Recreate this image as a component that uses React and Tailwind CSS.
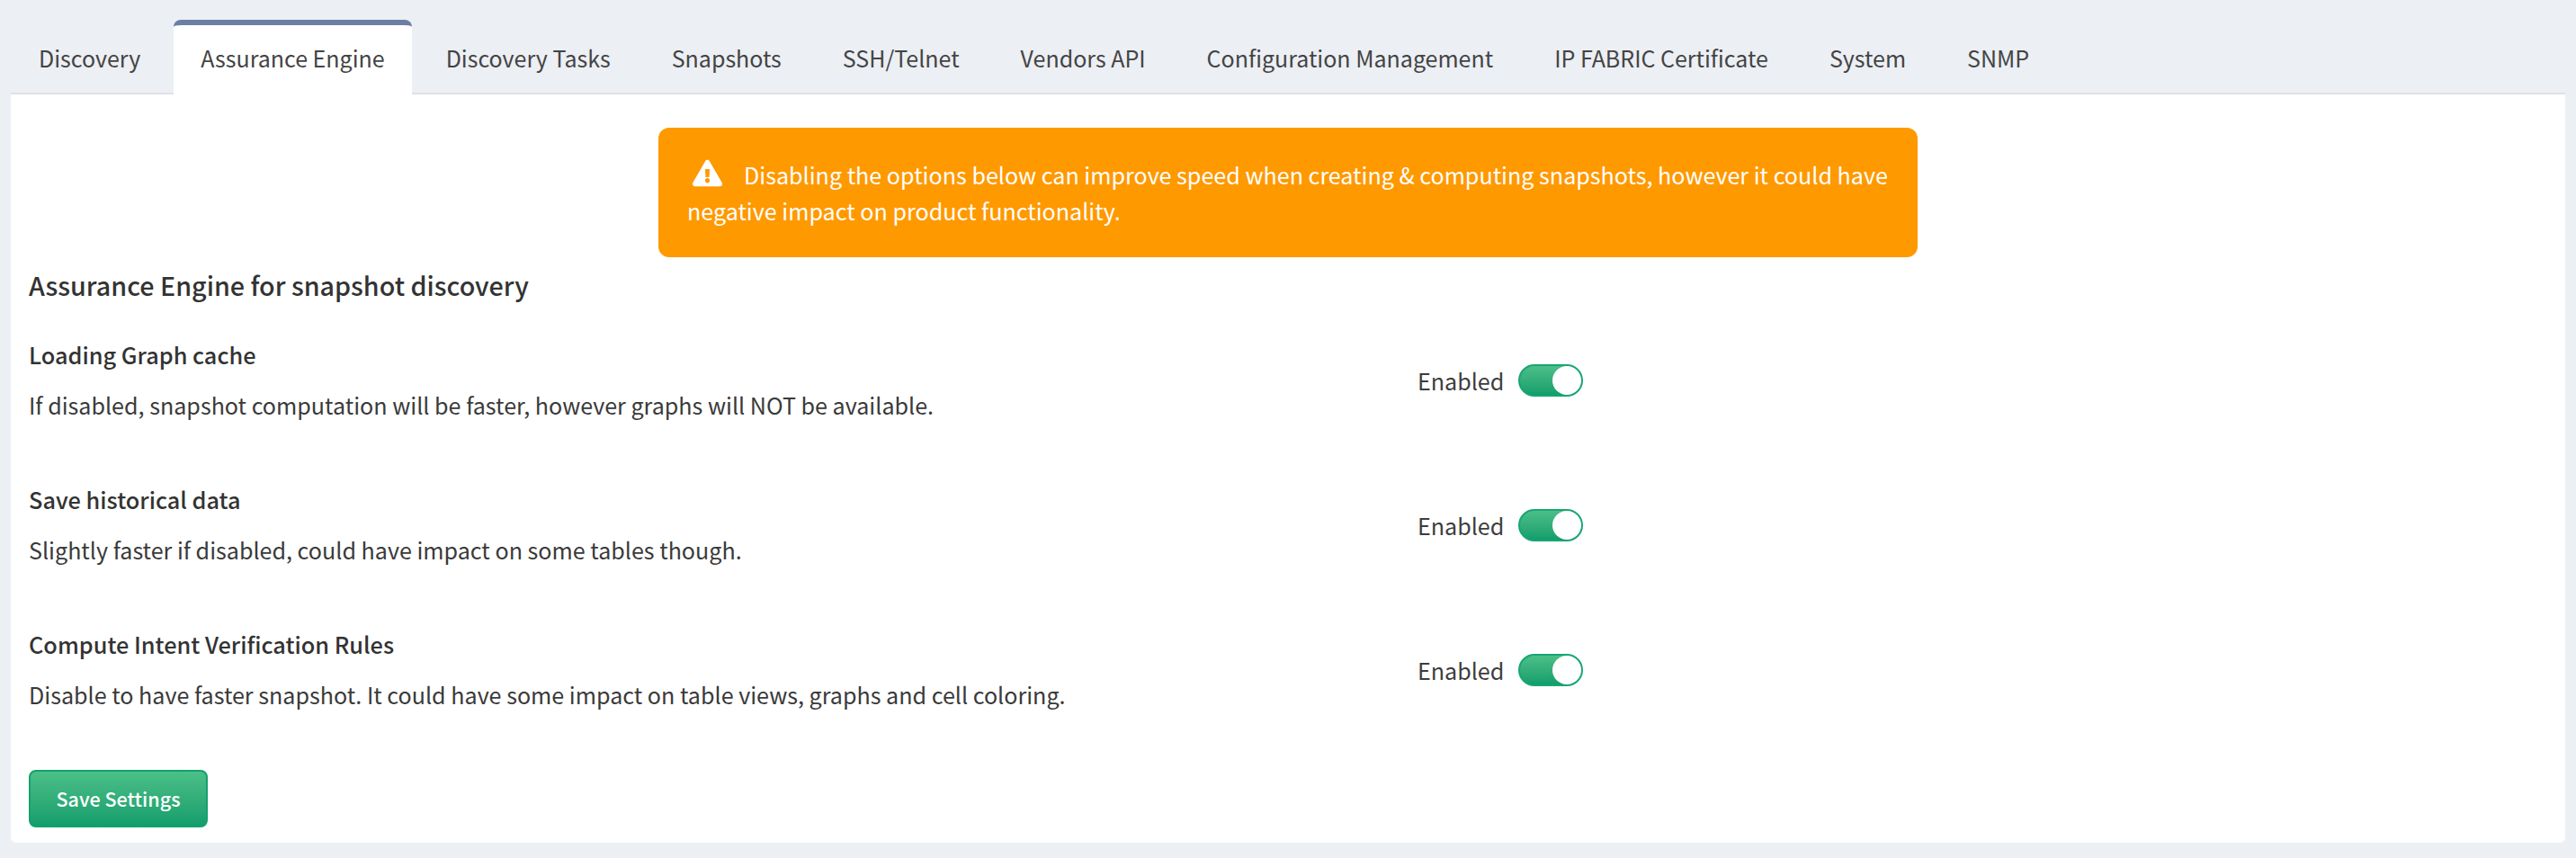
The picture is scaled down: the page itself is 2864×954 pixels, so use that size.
import React from "react";
import { FaExclamationTriangle } from "react-icons/fa";

const tabs = ["Discovery","Assurance Engine","Discovery Tasks","Snapshots","SSH/Telnet","Vendors API","Configuration Management","IP FABRIC Certificate","System","SNMP"];
const rows = [
  ["Loading Graph cache","If disabled, snapshot computation will be faster, however graphs will NOT be available."],
  ["Save historical data","Slightly faster if disabled, could have impact on some tables though."],
  ["Compute Intent Verification Rules","Disable to have faster snapshot. It could have some impact on table views, graphs and cell coloring."],
];

function Toggle() {
  return (
    <div className="flex items-center gap-[16px]">
      <span className="text-[25.1px] leading-[36px] text-[#3d3d3d]">Enabled</span>
      <div className="flex justify-end w-[72px] h-[36px] rounded-full border-2 border-[#17a673] bg-gradient-to-b from-[#4bbf88] to-[#0f9e6c]">
        <div className="w-[32px] h-[32px] rounded-full bg-white" />
      </div>
    </div>
  );
}

export default function App() {
  return (
    <div className="w-[2864px] h-[954px] bg-[#eceff4] pt-[22px] px-[12px] text-[#3a3a3a] font-['Noto_Sans_CJK_SC',sans-serif] overflow-hidden">
      <div className="flex h-[83px] pl-[1px] gap-[8px]">
        {tabs.map((t, i) => (
          <div key={t} className={i === 1
            ? "h-[83px] -ml-[1px] px-[30px] pt-[17px] text-[25px] leading-[38px] text-[#444] bg-white border-t-[6px] border-[#6b7fa3] rounded-t-[8px] whitespace-nowrap relative z-10"
            : "h-[83px] px-[30px] pt-[23px] text-[25px] leading-[38px] text-[#444] whitespace-nowrap"}>{t}</div>
        ))}
      </div>
      <div className="h-[834px] bg-white rounded-b-[6px] border-t-2 border-[#dfe1e4] -mt-[2px] px-[20px] pt-[37px]">
        <div className="w-[1400px] ml-[700px] h-[144px] rounded-[12px] bg-[#ff9900] text-white text-[25.1px] leading-[40px] px-[32px] pt-[32px]">
          <FaExclamationTriangle className="inline-block text-[33px] mr-[24px] ml-[6px] -mt-[12px] align-middle" />
          Disabling the options below can improve speed when creating &amp; computing snapshots, however it could have negative impact on product functionality.
        </div>
        <h2 className="mt-[10px] text-[28.7px] leading-[42px] font-medium text-[#333]">Assurance Engine for snapshot discovery</h2>
        <div className="mt-[38px] flex flex-col gap-[68px]">
          {rows.map(([a, b]) => (
            <div key={a} className="flex items-center">
              <div className="w-[1544px]">
                <div className="text-[25.3px] leading-[36px] font-medium text-[#333]">{a}</div>
                <div className="mt-[19px] text-[25.1px] leading-[38px] text-[#3a3a3a]">{b}</div>
              </div>
              <Toggle />
            </div>
          ))}
        </div>
        <button className="block mt-[65px] w-[199px] h-[64px] rounded-[8px] border-2 border-[#14a06f] bg-gradient-to-b from-[#4bbf88] to-[#0f9e6c] text-white text-[21.5px] font-medium">Save Settings</button>
      </div>
    </div>
  );
}
